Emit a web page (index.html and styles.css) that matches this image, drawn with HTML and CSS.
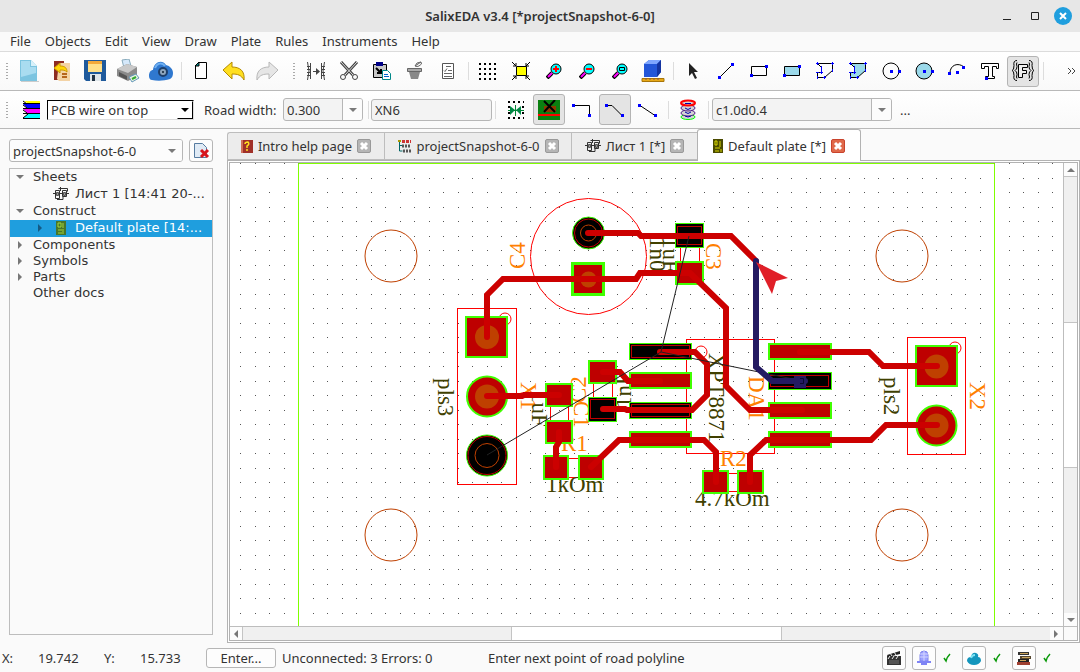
FILE: index.html
```
<!DOCTYPE html>
<html lang="en">
<head>
  <meta charset="UTF-8">
  <meta name="viewport" content="width=device-width, initial-scale=1">
  <title>SalixEDA v3.4 [*projectSnapshot-6-0]</title>
  <link rel="stylesheet" href="styles.css">
</head>
<body>

<!-- shared icons -->
<svg class="defs" width="0" height="0">
  <symbol id="i-x" viewBox="0 0 14 14">
    <path d="M4 4l6 6M10 4l-6 6" stroke="#fff" stroke-width="3"/>
  </symbol>
  <symbol id="i-sheet" viewBox="0 0 16 14">
    <path d="M2.500 3.500h4v8h-4zM9.500 3.500h4v6h-4zM0 6.500h16M4 12.500h6v-3M7.500 0v4M5.500 1.500h9v3" fill="none" stroke="#333"/>
    <path d="M3.500 5.500h2v3h-2zM10.500 5.500h2v3h-2z" fill="#999" stroke="#555"/>
  </symbol>
  <symbol id="i-lens" viewBox="0 0 16 16">
    <path d="M1 15l5-5" stroke="#000" stroke-width="4"/>
    <path d="M2 14l4-4" stroke="#f0f" stroke-width="2"/>
    <circle cx="10" cy="6" r="5" fill="#0ff" stroke="#000"/>
  </symbol>
  <symbol id="i-down" viewBox="0 0 8 4">
    <path d="M0 0h8l-4 4z" fill="#7a7a7a"/>
  </symbol>
  <symbol id="i-check" viewBox="0 0 10 10">
    <path d="M2 5l2 3q1-4 4-7" fill="none" stroke="#0a9a0a" stroke-width="1.500"/>
  </symbol>
</svg>

<header class="titlebar">
  <h1>SalixEDA v3.4 [*projectSnapshot-6-0]</h1>
  <div class="window-buttons">
    <button aria-label="Minimize"><svg width="10" height="10"><path d="M1 8.500h8" stroke="#222"/></svg></button>
    <button aria-label="Maximize"><svg width="10" height="10"><path d="M1.500 1.500h7v7h-7z" fill="none" stroke="#222"/></svg></button>
    <button class="close" aria-label="Close"><svg width="18" height="18"><circle cx="9" cy="9" r="9" fill="#1f9ede"/><path d="M6 6l6 6M12 6l-6 6" stroke="#fff" stroke-width="2"/></svg></button>
  </div>
</header>

<nav class="menubar">
  <button>File</button>
  <button>Objects</button>
  <button>Edit</button>
  <button>View</button>
  <button>Draw</button>
  <button>Plate</button>
  <button>Rules</button>
  <button>Instruments</button>
  <button>Help</button>
</nav>

<div class="toolbar">
  <div class="group">
    <span class="handle"></span>
    <button class="tool" aria-label="New">
      <svg width="24" height="24"><path d="M3 1h11l6 6v15H3z" fill="#7cc4e0"/><path d="M4 2h9v6h6v6L4 18z" fill="#a9dcf0"/><path d="M14 1l6 6h-6z" fill="#d8f1fa"/><path d="M4 22.500h18" stroke="#ccc"/></svg>
    </button>
    <button class="tool" aria-label="Open">
      <svg width="24" height="24"><path d="M4 2h10v19H4z" fill="#8d2c22"/><path d="M9 4h11v18H9l-2-2z" fill="#f3d3a6"/><path d="M12 15h5M12 18h5" stroke="#b5651d" stroke-width="2"/><path d="M4 9l6-5v3c5 0 7 2 7 6-2-2-4-2-7-2v3z" fill="#ffd60a" stroke="#c90"/></svg>
    </button>
    <button class="tool" aria-label="Save">
      <svg width="24" height="24"><path d="M1 1h22v21H3l-2-2z" fill="#1f5a9c"/><path d="M5 2h14v11H5z" fill="#ffe08a"/><path d="M5 2h14v3H5z" fill="#f2a93b"/><path d="M7 15h11v7H7z" fill="#dfe6ea"/><path d="M9 16h3v6H9z" fill="#234"/></svg>
    </button>
    <button class="tool" aria-label="Print">
      <svg width="24" height="24"><path d="M6 1l7-1 2 7-7 2z" fill="#d5e8fa" stroke="#8ab"/><path d="M1 10l10-5 10 3v9l-9 5-11-5z" fill="#8b8b8b"/><path d="M1 10l10-5 10 3-9 6z" fill="#c9c9c9"/><path d="M3 13l8 4v4l-8-4z" fill="#555"/><path d="M13 18l7-3 3 4-7 4z" fill="#e8f3e0" stroke="#69b"/><path d="M16 20l4-2" stroke="#3a3" stroke-width="2"/></svg>
    </button>
    <button class="tool" aria-label="Cloud">
      <svg width="26" height="24"><path d="M1 17c0-4 2-6 4-6C6 3 14 0 18 6c4 1 7 4 7 8 0 3-1 5-3 6-6 2-13 2-18 1-2 0-3-2-3-4z" fill="#2f78cf"/><path d="M7 9c2-5 7-6 10-2" fill="none" stroke="#6fb0f2" stroke-width="2"/><circle cx="15" cy="13" r="4" fill="#8ea6bd" stroke="#1d3f6b" stroke-width="2"/><circle cx="15" cy="13" r="1" fill="#123"/></svg>
    </button>
    <span class="sep"></span>
    <button class="tool" aria-label="Page">
      <svg width="14" height="20"><path d="M4.500 1.500h8v16h-11v-13z" fill="#fff" stroke="#000"/><path d="M1 5l4-4v4z" fill="#088" stroke="#000"/></svg>
    </button>
    <button class="tool" aria-label="Undo">
      <svg width="24" height="22"><path d="M1 10l9-8v5c8 0 13 4 12 13-3-5-6-6-12-6v5z" fill="#ffdf20" stroke="#b58a00"/></svg>
    </button>
    <button class="tool" aria-label="Redo">
      <svg width="24" height="22"><path d="M23 10l-9-8v5C6 7 1 11 2 20c3-5 6-6 12-6v5z" fill="#e6e6e6" stroke="#b8b8b8"/></svg>
    </button>
  </div>
  <div class="group second">
    <span class="handle"></span>
    <button class="tool" aria-label="Mirror">
      <svg width="20" height="20" fill="none" stroke="#444"><path d="M1.500 1q3 9 0 18M4.500 2v16M1 5.500h3M1 8.500h3M1 11.500h3M1 14.500h3M18.500 1q-3 9 0 18M15.500 2v16M16 5.500h3M16 8.500h3M16 11.500h3M16 14.500h3M7 10.500h5"/><path d="M10 7l4 3.500-4 3.500z" fill="#444" stroke="none"/></svg>
    </button>
    <button class="tool" aria-label="Cut">
      <svg width="20" height="20" fill="none" stroke="#444"><path d="M2 1l12 13M18 1L6 14" stroke-width="3"/><path d="M2 1l12 13M18 1L6 14" stroke="#ddd"/><circle cx="4" cy="16" r="2.500"/><circle cx="16" cy="16" r="2.500"/></svg>
    </button>
    <button class="tool" aria-label="Paste">
      <svg width="20" height="20"><path d="M1.500 3.500h13v13h-13z" fill="#c8c8c8" stroke="#000"/><path d="M4 1h7v4H4z" fill="#008"/><path d="M4 7l5 5M9 8v4H5" stroke="#000" stroke-width="2" fill="none"/><path d="M10.500 9.500h5l3 3v6h-8z" fill="#fff" stroke="#088"/><path d="M12 13.500h4M12 15.500h5" stroke="#06c"/></svg>
    </button>
    <button class="tool" aria-label="Delete">
      <svg width="18" height="20"><path d="M1.500 7.500h14v3h-14z" fill="#aaa" stroke="#666"/><path d="M3 11h11l-2 7H5z" fill="#888"/><path d="M9 5q1-4 6-4 2 2-2 4-2 1-4 0l6-4" fill="none" stroke="#666"/></svg>
    </button>
    <button class="tool" aria-label="Properties">
      <svg width="14" height="18"><path d="M1.500 1.500h11v15h-11z" fill="#fff" stroke="#555"/><path d="M5 4.500h5M3 8.500l1 1 2-3M7 8.500h4M3 11.500h8M3 14.500h8" fill="none" stroke="#666"/></svg>
    </button>
    <span class="sep"></span>
    <button class="tool" aria-label="Grid">
      <svg width="20" height="18"><path d="M1 2h18M1 7h18M1 12h18M1 17h18" stroke="#000" stroke-width="2" stroke-dasharray="2 3"/></svg>
    </button>
    <button class="tool" aria-label="Fit">
      <svg width="20" height="18"><path d="M5.500 4.500h10v9h-10z" fill="#ff0" stroke="#000"/><path d="M1 0l4 4M19 0l-4 4M1 18l4-4M19 18l-4-4M2 4h3V1M18 4h-3V1M2 14h3v3M18 14h-3v3" fill="none" stroke="#000"/></svg>
    </button>
    <button class="tool" aria-label="Zoom in">
      <svg width="16" height="16"><use href="#i-lens"/><path d="M7 6h6M10 3v6" stroke="#f00" stroke-width="2"/></svg>
    </button>
    <button class="tool" aria-label="Zoom out">
      <svg width="16" height="16"><use href="#i-lens"/><path d="M7 6h6" stroke="#f00" stroke-width="2"/></svg>
    </button>
    <button class="tool" aria-label="Zoom window">
      <svg width="16" height="16"><use href="#i-lens"/><path d="M7.500 4.500h5v3h-5z" fill="none" stroke="#000"/></svg>
    </button>
    <button class="tool" aria-label="3D view">
      <svg width="24" height="24"><path d="M3 5l5-4h12v12l-4 5H3z" fill="#2356d8"/><path d="M3 5l5-4h12l-4 4z" fill="#7ea6ff"/><path d="M16 5l4-4v12l-4 5z" fill="#1434a0"/><path d="M1 19.500h22v3H1z" fill="#e6a817" stroke="#a87508"/><path d="M5 19v2M9 19v2M13 19v2M17 19v2" stroke="#855"/></svg>
    </button>
    <span class="sep"></span>
    <button class="tool" aria-label="Select">
      <svg width="14" height="18"><path d="M3 1v13l3-3 3 6 2-1-3-6h4z" fill="#222"/></svg>
    </button>
    <button class="tool" aria-label="Line">
      <svg width="18" height="18"><path d="M3 15L15 3" stroke="#000"/><path d="M1 14h3v3H1zM14 1h3v3h-3z" fill="#00f"/></svg>
    </button>
    <button class="tool" aria-label="Rectangle">
      <svg width="18" height="14"><path d="M1.500 2.500h15v9h-15z" fill="none" stroke="#000"/><path d="M0 10h3v3H0zM15 1h3v3h-3z" fill="#00f"/></svg>
    </button>
    <button class="tool" aria-label="Filled rectangle">
      <svg width="18" height="14"><path d="M1.500 2.500h15v9h-15z" fill="#9bd9ea" stroke="#000"/><path d="M0 10h3v3H0zM15 1h3v3h-3z" fill="#00f"/></svg>
    </button>
    <button class="tool" aria-label="Polygon">
      <svg width="20" height="18"><path d="M2.500 1.500h15v7l-8 7h-7v-5h4v-5z" fill="none" stroke="#000"/><path d="M2.500 0v3M17.500 0v3M17.500 7v3M9.500 14v3M2.500 14v3M6.500 4v8M1 1.500h3M16 1.500h3M1 10.500h3M5 10.500h3M8 15.500h3" stroke="#00f"/></svg>
    </button>
    <button class="tool" aria-label="Filled polygon">
      <svg width="20" height="18"><path d="M2.500 1.500h15v7l-8 7h-7v-5h4v-5z" fill="#9bd9ea" stroke="#000"/><path d="M2.500 0v3M17.500 0v3M17.500 7v3M9.500 14v3M2.500 14v3M6.500 4v8M1 1.500h3M16 1.500h3M1 10.500h3M5 10.500h3M8 15.500h3" stroke="#00f"/></svg>
    </button>
    <button class="tool" aria-label="Circle">
      <svg width="20" height="18"><circle cx="10" cy="9" r="8" fill="none" stroke="#000"/><path d="M9 8h3v3H9zM17 8h3v3h-3z" fill="#00f"/></svg>
    </button>
    <button class="tool" aria-label="Filled circle">
      <svg width="20" height="18"><circle cx="10" cy="9" r="8" fill="#9bd9ea" stroke="#000"/><path d="M9 8h3v3H9zM17 8h3v3h-3z" fill="#00f"/></svg>
    </button>
    <button class="tool" aria-label="Arc">
      <svg width="18" height="18"><path d="M2 11C2 3 10 0 16 5" fill="none" stroke="#000"/><path d="M0 10h3v3H0zM14 4h3v3h-3zM8 9h3v3H8z" fill="#00f"/></svg>
    </button>
    <button class="tool" aria-label="Text">
      <svg width="20" height="18"><path d="M1.500 1.500h17v5h-2v-2h-4v10h2v2h-9v-2h3v-10h-4v2h-3z" fill="#fff" stroke="#000"/><path d="M5 15h3v3H5z" fill="#00f"/></svg>
    </button>
    <button class="tool pressed" aria-label="Functional text">
      <svg width="24" height="22" fill="none" stroke="#000"><path d="M7.500 4.500h9v3h-5v3h4v3h-4v4h-4z" fill="#eee"/><path d="M6 .500q-4 0-3 5 0 5-2 5 2 0 2 5-1 5 3 5M18 .500q4 0 3 5 0 5 2 5-2 0-2 5 1 5-3 5M6 2.500q-1 1 0 4 0 3-2 4 2 1 2 4-1 3 0 4M18 2.500q1 1 0 4 0 3 2 4-2 1-2 4 1 3 0 4"/></svg>
    </button>
    <span class="sep"></span>
  </div>
  <button class="more" aria-label="More"><svg width="10" height="8"><path d="M1 1l3 3-3 3M5 1l3 3-3 3" fill="none" stroke="#444"/></svg></button>
</div>

<div class="toolbar options">
  <span class="handle"></span>
  <svg class="layers" width="18" height="20"><path d="M2 1h16v2H5z" fill="#ff0"/><path d="M1 4h17v4H5z" fill="#00f"/><path d="M1 9h17v4H5z" fill="#f0f"/><path d="M1 18l5-4h12v4z" fill="#0ff"/><path d="M1 1l4 3M1 3.500h17M1 5l4 3M1 8.500h17M1 10l4 3M1 13.500h17M1 18l5-4M1 18.500h17" stroke="#000"/></svg>
  <span class="combo layer">
    <select aria-label="Layer"><option>PCB wire on top</option></select>
    <span class="arrow"><svg width="8" height="4"><path d="M0 0h8l-4 4z" fill="#000"/></svg></span>
  </span>
  <label for="road">Road width:</label>
  <span class="combo road">
    <select id="road"><option>0.300</option></select>
    <span class="arrow"><svg width="8" height="4"><use href="#i-down"/></svg></span>
  </span>
  <span class="sep"></span>
  <input class="net" type="text" value="XN6" aria-label="Net">
  <span class="sep"></span>
  <div class="group modes">
    <button class="tool" aria-label="Snap">
      <svg width="20" height="20"><path d="M2 2h16M2 7h2M16 7h2M2 13h2M16 13h2M2 18h16" stroke="#000" stroke-width="2" stroke-dasharray="2 3"/><path d="M9.500 5v11M2 10.500h16" stroke="#083"/><path d="M4 6l5 4-5 5zM15 6l-5 4 5 5z" fill="#084"/></svg>
    </button>
    <button class="tool pressed" aria-label="Clearance">
      <svg width="22" height="20"><path d="M0 0h22v20H0z" fill="#0a8010"/><path d="M6 6h12v6H6z" fill="#8b3a00"/><path d="M0 15h22" stroke="#f00" stroke-width="2"/><path d="M6 1l11 11M17 0L6 12" stroke="#000" stroke-width="2"/></svg>
    </button>
    <button class="tool" aria-label="Right angle">
      <svg width="20" height="16"><path d="M2 3.500h15.500V14" fill="none" stroke="#000"/><path d="M0 2h3v3H0zM16 12h3v3h-3z" fill="#00f"/></svg>
    </button>
    <button class="tool pressed" aria-label="45 degrees">
      <svg width="20" height="16"><path d="M2 3.500h5l10 10" fill="none" stroke="#000"/><path d="M0 2h3v3H0zM16 12h3v3h-3z" fill="#00f"/></svg>
    </button>
    <button class="tool" aria-label="Straight">
      <svg width="20" height="16"><path d="M2 3.500l15 10" fill="none" stroke="#000"/><path d="M0 2h3v3H0zM16 12h3v3h-3z" fill="#00f"/></svg>
    </button>
    <span class="sep"></span>
    <button class="tool" aria-label="Via">
      <svg width="18" height="22" fill="#d4d4d4"><ellipse cx="9" cy="18" rx="7" ry="2.500" stroke="#0f0"/><ellipse cx="9" cy="14" rx="7" ry="3" stroke="#528"/><ellipse cx="9" cy="9" rx="7" ry="3" stroke="#528"/><ellipse cx="9" cy="4" rx="7" ry="2.500" stroke="#f00" stroke-width="2"/><path d="M6 4.500h6M6 9q3 3 6 0M6 13q3 3 6 0M6 17q3 2 6 0" fill="none" stroke="#00a"/></svg>
    </button>
    <span class="sep"></span>
  </div>
  <span class="combo via">
    <select aria-label="Via type"><option>c1.0d0.4</option></select>
    <span class="arrow"><svg width="8" height="4"><use href="#i-down"/></svg></span>
  </span>
  <button class="dots">...</button>
</div>

<main>
  <aside>
    <div class="project">
      <span class="combo">
        <select aria-label="Project"><option>projectSnapshot-6-0</option></select>
        <span class="arrow"><svg width="8" height="4"><use href="#i-down"/></svg></span>
      </span>
      <button class="remove" aria-label="Close project"><svg width="18" height="18"><path d="M2.500 1.500h8l4 4v10h-12z" fill="#dfeaf5" stroke="#567ba0"/><path d="M9 8l7 7M16 8l-7 7" stroke="#d8141c" stroke-width="3"/></svg></button>
    </div>
    <ul class="tree">
      <li class="open">Sheets</li>
      <li class="child"><svg class="icon" width="16" height="14"><use href="#i-sheet"/></svg>Лист 1 [14:41 20-...</li>
      <li class="open">Construct</li>
      <li class="child shut selected"><svg class="icon" width="16" height="14"><path d="M3 0h10v14H3z" fill="#47752a"/><path d="M5 2h3v4H5zM10 2v5M5 9h6M5 12h4M10 10v3" fill="none" stroke="#a6d63c"/></svg>Default plate [14:...</li>
      <li class="shut small">Components</li>
      <li class="shut small">Symbols</li>
      <li class="shut small">Parts</li>
      <li class="small">Other docs</li>
    </ul>
  </aside>
  <span class="splitter"></span>

  <section class="editor">
    <div class="tabs">
      <div class="tab help">
        <svg width="12" height="15"><path d="M0 1h12v13H0z" fill="#a03028"/><path d="M0 1h2v13H0z" fill="#d0705a"/><path d="M4 5q0-2 3-2 2 2-1 4v2M6 10v2" fill="none" stroke="#ffe020" stroke-width="1.500"/></svg>
        <button class="name">Intro help page</button><button class="x" aria-label="Close tab"><svg width="14" height="14"><use href="#i-x"/></svg></button>
      </div>
      <div class="tab project-tab">
        <svg width="14" height="14" fill="none"><path d="M2.500 3v9h3M2.500 6.500h3" stroke="#066"/><path d="M1 1h3v2H1z" fill="#a90"/><path d="M5 2.500h9" stroke="#c33" stroke-width="3" stroke-dasharray="3 1"/><path d="M5 7h9M6 12h8" stroke="#555" stroke-width="3" stroke-dasharray="2 1"/></svg>
        <button class="name">projectSnapshot-6-0</button><button class="x" aria-label="Close tab"><svg width="14" height="14"><use href="#i-x"/></svg></button>
      </div>
      <div class="tab sheet">
        <svg width="16" height="14"><use href="#i-sheet"/></svg>
        <button class="name">Лист 1 [*]</button><button class="x" aria-label="Close tab"><svg width="14" height="14"><use href="#i-x"/></svg></button>
      </div>
      <div class="tab plate active">
        <svg width="10" height="14"><path d="M0 0h10v14H0z" fill="#4b4b00"/><path d="M2 2h2v4H2zM7 2v6M2 9h5M2 12h4M8 10v3" fill="none" stroke="#dada00"/></svg>
        <button class="name">Default plate [*]</button><button class="x" aria-label="Close tab"><svg width="14" height="14"><use href="#i-x"/></svg></button>
      </div>
    </div>

    <div class="pane">
      <div class="view">
        <svg class="board" width="100%" height="100%">
          <defs>
            <pattern id="grid" x="240" y="178" width="29" height="29" patternUnits="userSpaceOnUse">
              <path d="M0 0h1v1H0zM15 0h1v1h-1zM0 14h1v1H0zM15 14h1v1h-1z" fill="#555"/>
            </pattern>
          </defs>
          <g transform="translate(-229 -163)">
            <rect x="229" y="163" width="2000" height="2000" fill="url(#grid)"/>

            <!-- board edge and mounting holes -->
            <path class="edge" d="M298.500 2000V163.500h696V2000"/>
            <g class="hole">
              <circle cx="391" cy="256" r="26"/>
              <circle cx="902" cy="256" r="26"/>
              <circle cx="391" cy="535" r="26"/>
              <circle cx="902" cy="535" r="26"/>
            </g>

            <!-- part outlines -->
            <g class="outline">
              <circle cx="588.500" cy="256.500" r="58"/>
              <rect x="457.500" y="308.500" width="59" height="176"/>
              <circle cx="505" cy="319" r="6"/>
              <rect x="686.500" y="339.500" width="88" height="114"/>
              <circle cx="701" cy="352" r="6"/>
              <rect x="907.500" y="337.500" width="58" height="117"/>
              <circle cx="955" cy="348" r="6"/>
              <path d="M680.500 247v15M699.500 247v15M550.500 406v15M568.500 406v15M593.500 383v15M612.500 383v15M568 458.500h11M568 477.500h11M728 473.500h10M728 491.500h10"/>
            </g>

            <!-- names -->
            <g class="ref">
              <text transform="translate(525 269) rotate(-90)">C4</text>
              <text transform="translate(706 243) rotate(90)">C3</text>
              <text transform="translate(521 382) rotate(90)">X1</text>
              <text transform="translate(586 403) rotate(-90)">C2</text>
              <text transform="translate(574 401) rotate(90)">C1</text>
              <text transform="translate(749 376) rotate(90)">DA1</text>
              <text transform="translate(970 382) rotate(90)">X2</text>
              <text x="561" y="451">R1</text>
              <text x="720" y="466">R2</text>
            </g>
            <g class="val">
              <text transform="translate(650 237) rotate(90)">1n0</text>
              <text transform="translate(663 237) rotate(90)">1uF</text>
              <text transform="translate(438 378) rotate(90)">pls3</text>
              <text transform="translate(884 377) rotate(90)">pls2</text>
              <text transform="translate(532 391) rotate(90)">1uF</text>
              <text transform="translate(631 408) rotate(-90)">1nF</text>
              <text transform="translate(709 353) rotate(90)">XPT8871</text>
              <text x="546" y="492">1kOm</text>
              <text x="695" y="506">4.7kOm</text>
            </g>

            <!-- through-hole pads -->
            <g class="pad">
              <rect x="572.500" y="263.500" width="31" height="31" stroke-width="3"/>
              <rect x="466" y="317" width="41" height="40"/>
              <circle cx="487" cy="396.500" r="20"/>
              <rect x="916" y="346" width="41" height="40"/>
              <circle cx="936.500" cy="425.500" r="20"/>
            </g>
            <g class="drill">
              <circle cx="588.500" cy="279.500" r="8"/>
              <circle cx="487" cy="337" r="12"/>
              <circle cx="487" cy="396.500" r="12"/>
              <circle cx="936.500" cy="366.500" r="12"/>
              <circle cx="936.500" cy="425.500" r="12"/>
            </g>

            <!-- smd pads -->
            <g class="pad">
              <rect x="676" y="262" width="27" height="22"/>
              <rect x="546" y="384" width="26" height="22"/>
              <rect x="546" y="421" width="26" height="22"/>
              <rect x="589" y="361" width="27" height="22"/>
              <rect x="544" y="456" width="24" height="23"/>
              <rect x="579" y="456" width="24" height="23"/>
              <rect x="703" y="471" width="25" height="22"/>
              <rect x="738" y="471" width="25" height="22"/>
              <rect x="630" y="373" width="61" height="15"/>
              <rect x="630" y="432" width="61" height="15"/>
              <rect x="769" y="344" width="62" height="15"/>
              <rect x="769" y="403" width="62" height="15"/>
              <rect x="769" y="432" width="62" height="15"/>
            </g>

            <!-- pads that still belong to the unrouted net -->
            <g class="free">
              <circle cx="588.500" cy="233" r="16"/>
              <circle cx="487" cy="455.500" r="20.500"/>
              <rect x="675.500" y="223.500" width="28" height="24"/>
              <rect x="588.500" y="397.500" width="28" height="24"/>
              <rect x="629.500" y="343.500" width="62" height="16"/>
              <rect x="629.500" y="402.500" width="62" height="16"/>
              <rect x="768.500" y="372.500" width="63" height="17"/>
            </g>
            <g class="mask">
              <circle cx="588.500" cy="233" r="14"/>
              <circle cx="487" cy="455.500" r="19"/>
              <rect x="677.500" y="226.500" width="24" height="18"/>
              <rect x="590.500" y="399.500" width="24" height="19"/>
              <rect x="631.500" y="345.500" width="58" height="12"/>
              <rect x="631.500" y="404.500" width="58" height="12"/>
              <rect x="770.500" y="375.500" width="58" height="11"/>
            </g>
            <g class="hole">
              <circle cx="588.500" cy="233" r="8"/>
              <circle cx="487" cy="455.500" r="12"/>
            </g>

            <!-- roads -->
            <g class="road-line">
              <path d="M588 233h50l3 3h90l25 25"/>
              <path d="M487 337v-42l16-16h133l4-6h50l36 35v78l24 24h52"/>
              <path d="M487 396h35l2-1h35"/>
              <path d="M559 432v10l-3 5v20"/>
              <path d="M591 467l28-27h85l12 12v30"/>
              <path d="M603 372h17l8 9h32"/>
              <path d="M603 409h22l2 1h65l15-15v-31l-12-12h-35"/>
              <path d="M800 352h69l14 14h54"/>
              <path d="M750 482v-27l16-15h105l15-15h51"/>
            </g>
            <path class="air" d="M487 455l174-103 28-116M661 352l142 29"/>
            <path class="new-road" d="M756 261v106l16 14h33"/>
            <rect x="794" y="376" width="12" height="12" fill="#241a62"/>
            <path d="M800 378.500h3.500v5H800" fill="none" stroke="#0b0730"/>
            <path d="M756 262l32 16-12 3-4 13z" fill="#e01f28"/>
          </g>
        </svg>
      </div>
      <div class="scroll vertical">
        <button aria-label="Up"><svg width="8" height="4"><path d="M0 4h8l-4-4z" fill="#777"/></svg></button>
        <span class="track"></span><span class="thumb"></span><span class="track"></span>
        <button aria-label="Down"><svg width="8" height="4"><use href="#i-down"/></svg></button>
      </div>
      <div class="scroll horizontal">
        <button aria-label="Left"><svg width="4" height="8"><path d="M4 0v8L0 4z" fill="#777"/></svg></button>
        <span class="track"></span><span class="thumb"></span><span class="track"></span>
        <button aria-label="Right"><svg width="4" height="8"><path d="M0 0v8l4-4z" fill="#777"/></svg></button>
      </div>
      <span class="corner"></span>
    </div>
  </section>
</main>

<footer>
  <span class="axis">X:</span><span class="coord">19.742</span>
  <span class="axis">Y:</span><span class="coord">15.733</span>
  <button class="enter">Enter...</button>
  <span class="errors">Unconnected: 3 Errors: 0</span>
  <span class="hint">Enter next point of road polyline</span>
  <div class="lights">
    <button aria-label="Record"><svg width="16" height="16"><path d="M1 6h14v9H1z" fill="#333"/><path d="M1 5l13-4v3L2 7z" fill="#222"/><path d="M4 3l2 3M8 2l2 3M4 6l-2 3M8 6l-2 3M12 6l-2 3" stroke="#eee"/><path d="M3 11h10M3 13h10" stroke="#777"/></svg></button>
    <button aria-label="Server"><svg width="16" height="16"><path d="M4 11V5q0-4 4-4t4 4v6z" fill="#9da2ff" stroke="#7d82ec"/><path d="M8 1v10M4 4h8M4 7h8" stroke="#d4d6ff"/><path d="M1 11h14v2H1zM5 13h6v2H5z" fill="#7f84f5"/></svg></button>
    <svg class="ok" width="10" height="10"><use href="#i-check"/></svg>
    <button aria-label="Cloud state"><svg width="16" height="16"><path d="M1 11q0-4 4-4 1-5 5-4 3 1 2 4 3 0 3 4-2 4-7 4t-7-4z" fill="#1496bd"/><path d="M5 8q1-3 4-3" fill="none" stroke="#7fe4f4" stroke-width="2"/></svg></button>
    <svg class="ok" width="10" height="10"><use href="#i-check"/></svg>
    <button aria-label="Library"><svg width="16" height="16"><path d="M2 2h11v3H2z" fill="#333"/><path d="M4 6h11v3H4z" fill="#54462f"/><path d="M2 9h11v3H2z" fill="#222"/><path d="M1 12h13v3H1z" fill="#a04030"/><path d="M4 3.500h8M6 7.500h8M4 10.500h6" stroke="#c9a45c"/></svg></button>
    <svg class="ok" width="10" height="10"><use href="#i-check"/></svg>
  </div>
</footer>

</body>
</html>
```
FILE: styles.css
```
* {
  box-sizing: border-box;
}
body {
  margin: 0;
  height: 100vh;
  display: flex;
  flex-direction: column;
  background: #fafafa;
  color: #333;
  font: 13px "Noto Sans", sans-serif;
  overflow: hidden;
}
button, select, input {
  font: inherit;
  color: inherit;
}
button {
  background: none;
  border: none;
  padding: 0;
  white-space: nowrap;
}
svg {
  display: block;
  flex: none;
}
.defs {
  position: absolute;
}
/* Title */
.titlebar {
  position: relative;
  height: 32px;
  flex: none;
  display: flex;
  align-items: center;
  justify-content: center;
  background: #e7e7e7;
}
.titlebar h1 {
  margin: 0;
  font-size: 13px;
  font-weight: 600;
}
.window-buttons {
  position: absolute;
  right: 8px;
  display: flex;
  align-items: center;
  gap: 14px;
}
.window-buttons button {
  width: 14px;
  display: flex;
  justify-content: center;
}
.window-buttons .close {
  width: 18px;
  margin-left: -2px;
}
/* Menu */
.menubar {
  height: 20px;
  flex: none;
  display: flex;
  align-items: center;
  gap: 14px;
  padding: 0 10px 2px;
  border-bottom: 1px solid #dcdcdc;
}
/* Toolbars */
.toolbar {
  height: 39px;
  flex: none;
  display: flex;
  align-items: center;
  border-bottom: 1px solid #b9b9b9;
  background: linear-gradient(#fff, #f9f9f9);
}
.group {
  display: flex;
  align-items: center;
  gap: 1px;
}
.second {
  margin-left: 4px;
}
.handle {
  width: 12px;
  height: 18px;
  flex: none;
  padding: 0 3px 0 5px;
  background: radial-gradient(circle, #aaa 1px, transparent 1px) 0 0 / 4px 3px content-box;
}
.sep {
  width: 6px;
  height: 18px;
  flex: none;
  background: linear-gradient(#ddd, #ddd) center / 1px 100% no-repeat;
}
.tool {
  width: 32px;
  height: 31px;
  flex: none;
  display: flex;
  align-items: center;
  justify-content: center;
  border: 1px solid transparent;
  border-radius: 3px;
}
.pressed {
  background: #e4e4e4;
  border-color: #b4b4b4;
}
.more {
  margin-left: auto;
  padding-right: 3px;
}
.options {
  height: 38px;
}
.layers {
  margin: 0 7px 0 10px;
}
.modes {
  margin: 0 1px 0 2px;
}
.combo {
  position: relative;
  display: block;
  height: 23px;
}
.combo select {
  appearance: none;
  display: block;
  width: 100%;
  height: 100%;
  padding: 0 3px;
  border: 1px solid #b6b6b6;
  border-radius: 3px;
  background: #f3f3f3;
}
.combo .arrow {
  position: absolute;
  top: 1px;
  right: 1px;
  bottom: 1px;
  width: 20px;
  display: flex;
  align-items: center;
  justify-content: center;
  border-left: 1px solid #b6b6b6;
  border-radius: 0 2px 2px 0;
  background: #fcfcfc;
  pointer-events: none;
}
.layer {
  width: 147px;
  height: 20px;
  margin-right: 10px;
}
.layer select {
  border: 1px solid #000;
  border-right-color: #ddd;
  border-bottom-color: #ddd;
  border-radius: 0;
  background: #fff;
}
.combo.layer .arrow {
  width: 16px;
  border: 1px solid #000;
  border-top-color: #fff;
  border-left-color: #fff;
  border-radius: 0;
  background: #fff;
}
.toolbar label {
  width: 79px;
  flex: none;
  white-space: nowrap;
}
.road {
  width: 80px;
  margin-right: 2px;
}
.net {
  width: 121px;
  height: 22px;
  padding: 0 3px;
  border: 1px solid #b6b6b6;
  border-radius: 3px;
  background: #f3f3f3;
}
.via {
  width: 180px;
}
.dots {
  margin-left: 8px;
}
/* Project tree */
main {
  flex: 1;
  min-height: 0;
  display: flex;
}
aside {
  width: 213px;
  flex: none;
  display: flex;
  flex-direction: column;
  padding: 10px 0 8px 9px;
}
.project {
  display: flex;
  gap: 6px;
  margin-bottom: 6px;
}
.project .combo {
  flex: 1;
}
.project select, .remove {
  background: #fcfcfc;
}
.project .arrow {
  border: none;
}
.remove {
  width: 24px;
  height: 23px;
  display: flex;
  align-items: center;
  justify-content: center;
  border: 1px solid #b6b6b6;
  border-radius: 3px;
}
.tree {
  flex: 1;
  margin: 0;
  padding: 0;
  list-style: none;
  border: 1px solid #bdbdbd;
  font-family: "DejaVu Sans", sans-serif;
}
.tree li {
  position: relative;
  display: flex;
  align-items: center;
  height: 17px;
  padding: 0 0 2px 23px;
  white-space: nowrap;
}
.tree .small {
  height: 16px;
}
.tree .child {
  padding-left: 43px;
}
.tree .icon {
  margin-right: 6px;
}
.tree .selected {
  background: #1f9ede;
  color: #fff;
}
.open::before, .shut::before {
  content: "";
  position: absolute;
  left: 6px;
  top: 4px;
  border: 4px solid transparent;
}
.open::before {
  top: 6px;
  border-top-color: #777;
}
.shut::before {
  left: 8px;
  border-left-color: #777;
}
.child.shut::before {
  left: 28px;
  border-left-color: #145a85;
}
.splitter {
  width: 14px;
  flex: none;
}
/* Tabs */
.editor {
  flex: 1;
  min-width: 0;
  display: flex;
  flex-direction: column;
}
.tabs {
  height: 31px;
  flex: none;
  display: flex;
  align-items: flex-end;
}
.tab {
  height: 28px;
  display: flex;
  align-items: center;
  justify-content: center;
  gap: 5px;
  border: 1px solid #bdbdbd;
  border-right: none;
  background: #ececec;
}
.help {
  width: 157px;
  border-radius: 3px 0 0 0;
}
.project-tab {
  width: 187px;
}
.sheet {
  width: 126px;
}
.plate {
  width: 164px;
}
.tab.active {
  height: 32px;
  margin-bottom: -1px;
  position: relative;
  background: #fff;
  border: 1px solid #b2b2b2;
  border-bottom: none;
  border-radius: 3px 3px 0 0;
}
.x {
  border-radius: 2px;
  background: #b5b5b5;
  border: 1px solid #999;
  width: 14px;
  height: 14px;
  display: flex;
  align-items: center;
  justify-content: center;
}
.active .x {
  background: #e0694a;
  border-color: #c9432c;
}
/* Drawing */
.pane {
  flex: 1;
  min-height: 0;
  display: grid;
  grid-template-columns: 1fr 15px;
  grid-template-rows: 1fr 15px;
  padding: 1px;
  border: 1px solid #b2b2b2;
  outline: 1px solid #b2b2b2;
  outline-offset: -3px;
  background: #fff;
}
.view {
  overflow: hidden;
  min-height: 0;
  margin-top: 1px;
}
.edge {
  fill: none;
  stroke: #80ff00;
}
.hole {
  fill: none;
  stroke: #bf4000;
}
.outline {
  fill: none;
  stroke: #ff0000;
}
.board text {
  font: 23px "Liberation Serif", serif;
}
.ref {
  fill: #ff8000;
}
.val {
  fill: #404000;
}
.pad {
  fill: #be0000;
  stroke: #40ff00;
  stroke-width: 2px;
}
.drill {
  fill: #bf4000;
}
.free {
  fill: #000;
  stroke: #40ff00;
}
.mask {
  fill: none;
  stroke: #be0000;
}
.road-line {
  fill: none;
  stroke: #cc0000;
  stroke-width: 6px;
  stroke-linecap: round;
}
.air {
  fill: none;
  stroke: #222;
}
.new-road {
  fill: none;
  stroke: #241a62;
  stroke-width: 6px;
  stroke-linecap: round;
}
/* Scroll bars */
.scroll {
  display: flex;
  background: #f0f0f0;
}
.scroll button {
  width: 13px;
  height: 13px;
  flex: none;
  display: flex;
  align-items: center;
  justify-content: center;
  background: #fcfcfc;
}
.scroll span {
  flex: 1;
}
.thumb {
  background: #fff;
}
.vertical {
  flex-direction: column;
  border-left: 1px solid #bdbdbd;
  border-right: 1px solid #bdbdbd;
  margin-top: 1px;
}
.vertical .track {
  border-top: 1px solid #c4c4c4;
}
.vertical .thumb {
  border-top: 1px solid #c4c4c4;
}
.horizontal {
  border-top: 1px solid #bdbdbd;
  border-bottom: 1px solid #bdbdbd;
}
.horizontal .track {
  border-left: 1px solid #c4c4c4;
}
.horizontal .thumb {
  border-left: 1px solid #c4c4c4;
}
.corner {
  background: #fafafa;
  border: 1px solid #bdbdbd;
}
/* Status */
footer {
  height: 29px;
  flex: none;
  display: flex;
  align-items: center;
  white-space: nowrap;
}
.axis {
  width: 38px;
  padding-left: 2px;
}
.coord {
  width: 64px;
}
.enter {
  width: 70px;
  height: 20px;
  margin: 0 6px 0 2px;
  border: 1px solid #b6b6b6;
  border-radius: 3px;
  background: #fdfdfd;
}
.errors {
  width: 206px;
}
.lights {
  margin-left: auto;
  margin-right: 24px;
  display: flex;
  align-items: center;
  gap: 6px;
}
.lights button {
  width: 24px;
  height: 24px;
  display: flex;
  align-items: center;
  justify-content: center;
  border: 1px solid #b6b6b6;
  border-radius: 3px;
  background: #fdfdfd;
}
.ok {
  margin-right: 4px;
}
```
